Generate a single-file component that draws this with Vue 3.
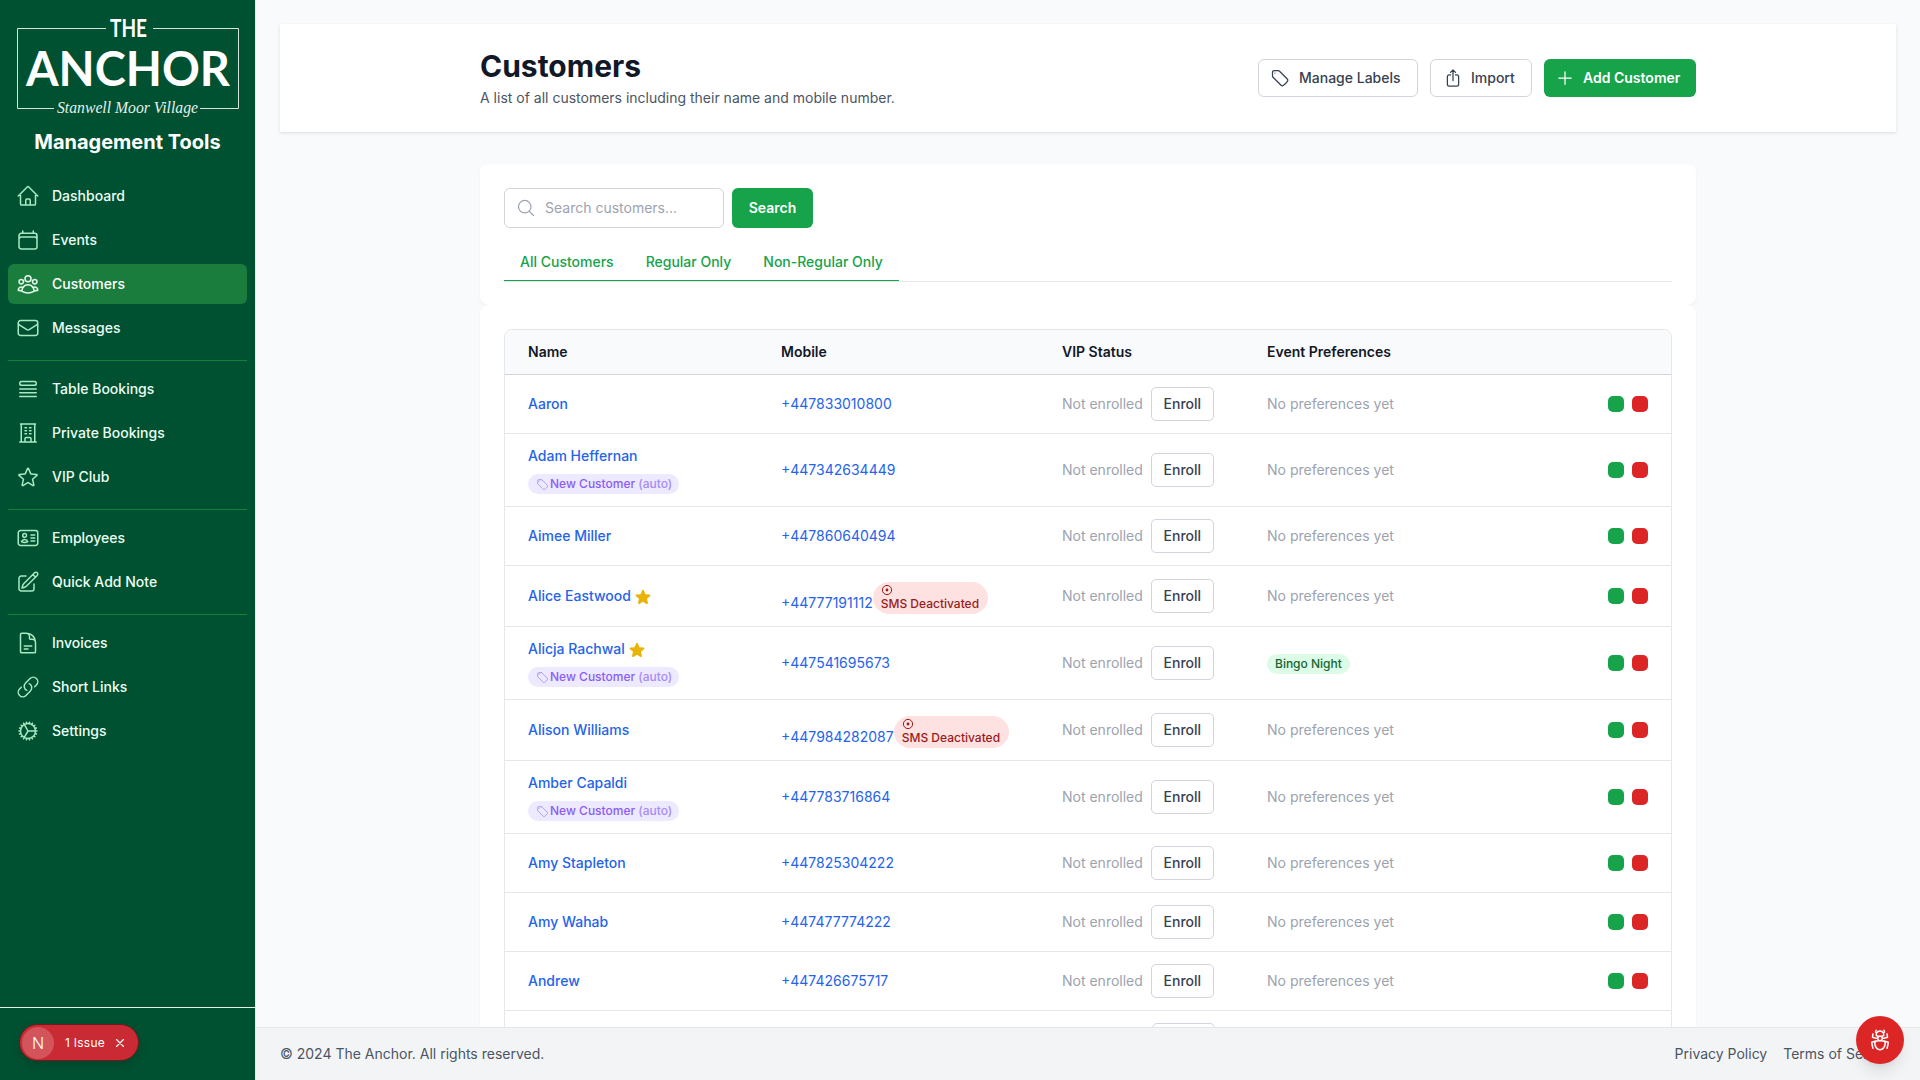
<script setup>
const icons = {
  home: "m2.25 12 8.954-8.955c.44-.439 1.152-.439 1.591 0L21.75 12M4.5 9.75v10.125c0 .621.504 1.125 1.125 1.125H9.75v-4.875c0-.621.504-1.125 1.125-1.125h2.25c.621 0 1.125.504 1.125 1.125V21h4.125c.621 0 1.125-.504 1.125-1.125V9.75M8.25 21h8.25",
  calendar: "M6.75 3v2.25M17.25 3v2.25M3 18.75V7.5a2.25 2.25 0 0 1 2.25-2.25h13.5A2.25 2.25 0 0 1 21 7.5v11.25m-18 0A2.25 2.25 0 0 0 5.25 21h13.5A2.25 2.25 0 0 0 21 18.75m-18 0v-7.5A2.25 2.25 0 0 1 5.25 9h13.5A2.25 2.25 0 0 1 21 11.25v7.5",
  users: "M18 18.72a9.094 9.094 0 0 0 3.741-.479 3 3 0 0 0-4.682-2.72m.94 3.198.001.031c0 .225-.012.447-.037.666A11.944 11.944 0 0 1 12 21c-2.17 0-4.207-.576-5.963-1.584A6.062 6.062 0 0 1 6 18.719m12 0a5.971 5.971 0 0 0-.941-3.197m0 0A5.995 5.995 0 0 0 12 12.75a5.995 5.995 0 0 0-5.058 2.772m0 0a3 3 0 0 0-4.681 2.72 8.986 8.986 0 0 0 3.74.477m.94-3.197a5.971 5.971 0 0 0-.94 3.197M15 6.75a3 3 0 1 1-6 0 3 3 0 0 1 6 0Zm6 3a2.25 2.25 0 1 1-4.5 0 2.25 2.25 0 0 1 4.5 0Zm-13.5 0a2.25 2.25 0 1 1-4.5 0 2.25 2.25 0 0 1 4.5 0Z",
  mail: "M21.75 6.75v10.5a2.25 2.25 0 0 1-2.25 2.25h-15a2.25 2.25 0 0 1-2.25-2.25V6.75m19.5 0A2.25 2.25 0 0 0 19.5 4.5h-15a2.25 2.25 0 0 0-2.25 2.25m19.5 0v.243a2.25 2.25 0 0 1-1.07 1.916l-7.5 4.615a2.25 2.25 0 0 1-2.36 0L3.32 8.91a2.25 2.25 0 0 1-1.07-1.916V6.75",
  queue: "M3.75 12h16.5m-16.5 3.75h16.5m-16.5 3.75h16.5M5.625 4.5h12.75a1.875 1.875 0 0 1 0 3.75H5.625a1.875 1.875 0 0 1 0-3.75Z",
  building: "M3.75 21h16.5M4.5 3h15M5.25 3v18m13.5-18v18M9 6.75h1.5m-1.5 3h1.5m-1.5 3h1.5m3-6H15m-1.5 3H15m-1.5 3H15M9 21v-3.375c0-.621.504-1.125 1.125-1.125h3.75c.621 0 1.125.504 1.125 1.125V21",
  star: "M11.48 3.499a.562.562 0 0 1 1.04 0l2.125 5.111a.563.563 0 0 0 .475.345l5.518.442c.499.04.701.663.321.988l-4.204 3.602a.563.563 0 0 0-.182.557l1.285 5.385a.562.562 0 0 1-.84.61l-4.725-2.885a.562.562 0 0 0-.586 0L6.982 20.54a.562.562 0 0 1-.84-.61l1.285-5.386a.562.562 0 0 0-.182-.557l-4.204-3.602a.562.562 0 0 1 .321-.988l5.518-.442a.563.563 0 0 0 .475-.345L11.48 3.5Z",
  id: "M15 9h3.75M15 12h3.75M15 15h3.75M4.5 19.5h15a2.25 2.25 0 0 0 2.25-2.25V6.75A2.25 2.25 0 0 0 19.5 4.5h-15a2.25 2.25 0 0 0-2.25 2.25v10.5A2.25 2.25 0 0 0 4.5 19.5Zm6-10.125a1.875 1.875 0 1 1-3.75 0 1.875 1.875 0 0 1 3.75 0Zm1.294 6.336a6.721 6.721 0 0 1-3.17.789 6.721 6.721 0 0 1-3.168-.789 3.376 3.376 0 0 1 6.338 0Z",
  pencil: "m16.862 4.487 1.687-1.688a1.875 1.875 0 1 1 2.652 2.652L10.582 16.07a4.5 4.5 0 0 1-1.897 1.13L6 18l.8-2.685a4.5 4.5 0 0 1 1.13-1.897l8.932-8.931Zm0 0L19.5 7.125M18 14v4.75A2.25 2.25 0 0 1 15.75 21H5.25A2.25 2.25 0 0 1 3 18.75V8.25A2.25 2.25 0 0 1 5.25 6H10",
  doc: "M19.5 14.25v-2.625a3.375 3.375 0 0 0-3.375-3.375h-1.5A1.125 1.125 0 0 1 13.5 7.125v-1.5a3.375 3.375 0 0 0-3.375-3.375H8.25m0 12.75h7.5m-7.5 3H12M10.5 2.25H5.625c-.621 0-1.125.504-1.125 1.125v17.25c0 .621.504 1.125 1.125 1.125h12.75c.621 0 1.125-.504 1.125-1.125V11.25a9 9 0 0 0-9-9Z",
  link: "M13.19 8.688a4.5 4.5 0 0 1 1.242 7.244l-4.5 4.5a4.5 4.5 0 0 1-6.364-6.364l1.757-1.757m13.35-.622 1.757-1.757a4.5 4.5 0 0 0-6.364-6.364l-4.5 4.5a4.5 4.5 0 0 0 1.242 7.244",
  cog: "M4.5 12a7.5 7.5 0 0 0 15 0m-15 0a7.5 7.5 0 1 1 15 0m-15 0H3m16.5 0H21m-1.5 0H12m-8.457 3.077 1.41-.513m14.095-5.13 1.41-.513M5.106 17.785l1.15-.964m11.49-9.642 1.149-.964M7.501 19.795l.75-1.3m7.5-12.99.75-1.3m-6.063 16.658.26-1.477m2.605-14.772.26-1.477m0 17.726-.26-1.477M10.698 4.614l-.26-1.477M16.5 19.794l-.75-1.299M7.5 4.205 12 12m6.894 5.785-1.149-.964M6.256 7.178l-1.15-.964m15.352 8.864-1.41-.513M4.954 9.435l-1.41-.514M12.002 12l-3.75 6.495",
  tag: "M9.568 3H5.25A2.25 2.25 0 0 0 3 5.25v4.318c0 .597.237 1.17.659 1.591l9.581 9.581c.699.699 1.78.872 2.607.33a18.095 18.095 0 0 0 5.223-5.223c.542-.827.369-1.908-.33-2.607L11.16 3.66A2.25 2.25 0 0 0 9.568 3ZM6 6h.008v.008H6V6Z",
  upload: "M9 8.25H7.5a2.25 2.25 0 0 0-2.25 2.25v9a2.25 2.25 0 0 0 2.25 2.25h9a2.25 2.25 0 0 0 2.25-2.25v-9a2.25 2.25 0 0 0-2.25-2.25H15m0-3-3-3m0 0-3 3m3-3V15",
  plus: "M12 4.5v15m7.5-7.5h-15",
  search: "m21 21-5.197-5.197m0 0A7.5 7.5 0 1 0 5.196 5.196a7.5 7.5 0 0 0 10.607 10.607Z",
  close: "M6 18 18 6M6 6l12 12",
  bug: "M12 12.75c1.148 0 2.278.08 3.383.237 1.037.146 1.866.966 1.866 2.013 0 3.728-2.35 6.75-5.25 6.75S6.75 18.728 6.75 15c0-1.046.83-1.867 1.866-2.013A24.204 24.204 0 0 1 12 12.75Zm0 0c2.883 0 5.647.508 8.207 1.44a23.91 23.91 0 0 1-1.152 6.06M12 12.75c-2.883 0-5.647.508-8.208 1.44.125 2.104.52 4.136 1.153 6.06M12 12.75a2.25 2.25 0 0 0 2.248-2.354M12 12.75a2.25 2.25 0 0 1-2.248-2.354M12 8.25c.995 0 1.971-.08 2.922-.236.403-.066.74-.358.795-.762a3.778 3.778 0 0 0-.399-2.25M12 8.25c-.995 0-1.97-.08-2.922-.236-.402-.066-.74-.358-.795-.762a3.734 3.734 0 0 1 .4-2.253M12 8.25a2.25 2.25 0 0 0-2.248 2.146M12 8.25a2.25 2.25 0 0 1 2.248 2.146M8.683 5a6.032 6.032 0 0 1-1.155-1.002c.07-.63.27-1.222.574-1.747m.581 2.749A3.75 3.75 0 0 1 15.318 5m0 0c.427-.283.815-.62 1.155-.999a4.471 4.471 0 0 0-.575-1.752M4.921 6a24.048 24.048 0 0 0-.392 3.314c1.668.546 3.416.914 5.223 1.082M19.08 6c.205 1.08.337 2.187.392 3.314a23.882 23.882 0 0 1-5.223 1.082"
}

const starSolid = "M10.788 3.21c.448-1.077 1.976-1.077 2.424 0l2.082 5.006 5.404.434c1.164.093 1.636 1.545.749 2.305l-4.117 3.527 1.257 5.273c.271 1.136-.964 2.033-1.96 1.425L12 18.354 7.373 21.18c-.996.608-2.231-.29-1.96-1.425l1.257-5.273-4.117-3.527c-.887-.76-.415-2.212.749-2.305l5.404-.434 2.082-5.005Z"

const navGroups = [
  [
    { label: "Dashboard", icon: "home" },
    { label: "Events", icon: "calendar" },
    { label: "Customers", icon: "users", active: true },
    { label: "Messages", icon: "mail" }
  ],
  [
    { label: "Table Bookings", icon: "queue" },
    { label: "Private Bookings", icon: "building" },
    { label: "VIP Club", icon: "star" }
  ],
  [
    { label: "Employees", icon: "id" },
    { label: "Quick Add Note", icon: "pencil" }
  ],
  [
    { label: "Invoices", icon: "doc" },
    { label: "Short Links", icon: "link" },
    { label: "Settings", icon: "cog" }
  ]
]

const customers = [
  { name: "Aaron", mobile: "+447833010800" },
  { name: "Adam Heffernan", mobile: "+447342634449", isNew: true },
  { name: "Aimee Miller", mobile: "+447860640494" },
  { name: "Alice Eastwood", mobile: "+44777191112", star: true, sms: true },
  { name: "Alicja Rachwal", mobile: "+447541695673", star: true, isNew: true, pref: "Bingo Night" },
  { name: "Alison Williams", mobile: "+447984282087", sms: true },
  { name: "Amber Capaldi", mobile: "+447783716864", isNew: true },
  { name: "Amy Stapleton", mobile: "+447825304222" },
  { name: "Amy Wahab", mobile: "+447477774222" },
  { name: "Andrew", mobile: "+447426675717" },
  // only the top of this row's button shows above the footer
  { name: "", mobile: "" }
]
</script>

<template>
  <div class="app">
    <!-- SIDEBAR -->
    <aside class="sidebar">
      <svg class="logo" width="255" height="128" viewBox="0 0 255 128">
        <path class="logo-frame" d="M106 28.5H17.5V108.5H54M153 28.5H238.5V108.5H200" />
        <text class="logo-the" x="110" y="37" textLength="37" lengthAdjust="spacingAndGlyphs">THE</text>
        <text class="logo-anchor" x="26" y="86" textLength="204" lengthAdjust="spacingAndGlyphs">ANCHOR</text>
        <text class="logo-script" x="57" y="113" textLength="141" lengthAdjust="spacingAndGlyphs">Stanwell Moor Village</text>
      </svg>
      <div class="brand">Management Tools</div>

      <nav class="nav">
        <div v-for="(group, i) in navGroups" :key="i" class="nav-group">
          <a v-for="item in group" :key="item.label" class="nav-item" :class="{ active: item.active }">
            <svg class="nav-icon" viewBox="0 0 24 24" fill="none" stroke="currentColor" stroke-width="1.5" stroke-linecap="round" stroke-linejoin="round">
              <path :d="icons[item.icon]" />
            </svg>
            {{ item.label }}
          </a>
        </div>
      </nav>

      <div class="sidebar-bottom">
        <div class="issue-pill">
          <span class="issue-n">N</span>
          <span class="issue-text">1 Issue</span>
          <svg class="issue-x" viewBox="0 0 24 24" fill="none" stroke="currentColor" stroke-width="2" stroke-linecap="round">
            <path :d="icons.close" />
          </svg>
        </div>
      </div>
    </aside>

    <div class="main">
      <div class="scroll">
        <!-- HEADER -->
        <header class="page-header">
          <div class="container header-row">
            <div>
              <h1 class="title">Customers</h1>
              <p class="subtitle">A list of all customers including their name and mobile number.</p>
            </div>
            <div class="header-actions">
              <button class="btn btn-labels">
                <svg class="btn-icon" viewBox="0 0 24 24" fill="none" stroke="currentColor" stroke-width="1.5" stroke-linecap="round" stroke-linejoin="round"><path :d="icons.tag" /></svg>
                Manage Labels
              </button>
              <button class="btn btn-import">
                <svg class="btn-icon" viewBox="0 0 24 24" fill="none" stroke="currentColor" stroke-width="1.5" stroke-linecap="round" stroke-linejoin="round"><path :d="icons.upload" /></svg>
                Import
              </button>
              <button class="btn btn-primary btn-add">
                <svg class="btn-icon" viewBox="0 0 24 24" fill="none" stroke="currentColor" stroke-width="1.5" stroke-linecap="round" stroke-linejoin="round"><path :d="icons.plus" /></svg>
                Add Customer
              </button>
            </div>
          </div>
        </header>

        <div class="container content">
          <!-- SEARCH + TABS -->
          <section class="card search-card">
            <div class="search-row">
              <div class="search-box">
                <svg class="search-icon" viewBox="0 0 24 24" fill="none" stroke="currentColor" stroke-width="1.5" stroke-linecap="round" stroke-linejoin="round"><path :d="icons.search" /></svg>
                <input class="search-input" placeholder="Search customers..." />
              </div>
              <button class="btn btn-primary btn-search">Search</button>
            </div>
            <div class="tabs">
              <div class="tab-list">
                <a class="tab">All Customers</a>
                <a class="tab">Regular Only</a>
                <a class="tab">Non-Regular Only</a>
              </div>
            </div>
          </section>

          <!-- TABLE -->
          <section class="card table-card">
            <div class="table-wrap">
              <table class="table">
                <colgroup>
                  <col style="width: 253px" />
                  <col style="width: 281px" />
                  <col style="width: 205px" />
                  <col />
                  <col style="width: 120px" />
                </colgroup>
                <thead>
                  <tr>
                    <th>Name</th>
                    <th>Mobile</th>
                    <th>VIP Status</th>
                    <th>Event Preferences</th>
                    <th></th>
                  </tr>
                </thead>
                <tbody>
                  <tr v-for="(c, i) in customers" :key="i">
                    <td>
                      <div class="name-line">
                        <a class="link">{{ c.name }}</a>
                        <svg v-if="c.star" class="star" viewBox="0 0 24 24" fill="#eab308"><path :d="starSolid" /></svg>
                      </div>
                      <div v-if="c.isNew" class="label-pill">
                        <svg class="label-icon" viewBox="0 0 24 24" fill="none" stroke="currentColor" stroke-width="1.5" stroke-linecap="round" stroke-linejoin="round"><path :d="icons.tag" /></svg>
                        <span>New Customer <span class="auto">(auto)</span></span>
                      </div>
                    </td>
                    <td>
                      <a class="link phone">{{ c.mobile }}</a><span v-if="c.sms" class="sms-badge">
                        <svg class="sms-icon" viewBox="0 0 12 12" fill="none" stroke="currentColor"><circle cx="6" cy="6" r="4.6" /><circle cx="6" cy="6" r="1.4" fill="currentColor" stroke="none" /></svg>
                        SMS Deactivated
                      </span>
                    </td>
                    <td>
                      <div class="vip">
                        <span v-if="c.name" class="muted">Not enrolled</span>
                        <span v-else class="blank-status"></span>
                        <button class="enroll">{{ c.name ? "Enroll" : "" }}</button>
                      </div>
                    </td>
                    <td>
                      <span v-if="c.pref" class="pref">{{ c.pref }}</span>
                      <span v-else-if="c.name" class="muted">No preferences yet</span>
                    </td>
                    <td>
                      <div class="row-actions">
                        <span class="dot green"></span>
                        <span class="dot red"></span>
                      </div>
                    </td>
                  </tr>
                </tbody>
              </table>
            </div>
          </section>
        </div>
      </div>

      <!-- FOOTER -->
      <footer class="footer">
        <span>© 2024 The Anchor. All rights reserved.</span>
        <div class="footer-links">
          <a>Privacy Policy</a>
          <a>Terms of Service</a>
        </div>
      </footer>
    </div>

    <button class="bug-btn">
      <svg viewBox="0 0 24 24" fill="none" stroke="currentColor" stroke-width="1.5" stroke-linecap="round" stroke-linejoin="round"><path :d="icons.bug" /></svg>
    </button>
  </div>
</template>

<style>
html, body {
  margin: 0;
  height: 100%;
  overflow: hidden;
}
</style>

<style scoped>
.app {
  display: flex;
  height: 100vh;
  overflow: hidden;
  background: #f9fafb;
  font-family: Inter, "Liberation Sans", sans-serif;
  font-size: 14px;
  line-height: 20px;
  color: #111827;
}

/* sidebar */
.sidebar {
  width: 255px;
  flex-shrink: 0;
  display: flex;
  flex-direction: column;
  background: #005131;
  color: #f0fdf4;
  border-right: 1px solid #e5e7eb;
}

.logo {
  display: block;
  flex-shrink: 0;
}

.logo-frame {
  fill: none;
  stroke: #d5e5dc;
  stroke-width: 1;
}

.logo-the {
  font-family: Lato, sans-serif;
  font-size: 24px;
  font-weight: 700;
  fill: #fff;
}

.logo-anchor {
  font-family: Lato, sans-serif;
  font-size: 47px;
  font-weight: 700;
  fill: #fff;
}

.logo-script {
  font-family: "Liberation Serif", serif;
  font-style: italic;
  font-size: 17px;
  fill: #e6f0ea;
}

.brand {
  height: 28px;
  line-height: 28px;
  text-align: center;
  font-size: 20px;
  font-weight: 700;
  color: #fff;
}

.nav {
  margin-top: 20px;
  display: flex;
  flex-direction: column;
  padding: 0 8px;
}

.nav-group {
  display: flex;
  flex-direction: column;
  gap: 4px;
  padding: 8px 0 12px;
  border-bottom: 1px solid #15803d;
}

.nav-group:first-child {
  padding-top: 0;
}

.nav-group:last-child {
  border-bottom: none;
}

.nav-item {
  height: 40px;
  display: flex;
  align-items: center;
  gap: 12px;
  padding: 0 8px;
  border-radius: 6px;
  font-weight: 500;
  color: #ecfdf3;
}

.nav-item.active {
  background: #1a7d3e;
  color: #fff;
}

.nav-icon {
  width: 24px;
  height: 24px;
  flex-shrink: 0;
  color: #a7e9c1;
}

.nav-item.active .nav-icon {
  color: #e6f9ec;
}

.sidebar-bottom {
  margin-top: auto;
  height: 73px;
  box-sizing: border-box;
  padding: 16px 19px;
  border-top: 1px solid #e5efe9;
}

.issue-pill {
  width: 120px;
  height: 37px;
  box-sizing: border-box;
  display: flex;
  align-items: center;
  border-radius: 19px;
  background: #ca2a33;
  border: 1px solid #6d1b1f;
  box-shadow: 0 4px 10px rgba(0, 0, 0, .15);
  color: #fff;
  padding-left: 2px;
}

.issue-n {
  width: 32px;
  height: 32px;
  flex-shrink: 0;
  display: flex;
  align-items: center;
  justify-content: center;
  border-radius: 50%;
  background: rgba(255, 255, 255, .2);
  font-size: 16px;
  font-weight: 300;
}

.issue-text {
  margin-left: 11px;
  font-size: 12px;
  font-weight: 400;
  letter-spacing: .25px;
}

.issue-x {
  width: 14px;
  height: 14px;
  margin-left: 8px;
}

/* main */
.main {
  flex: 1;
  min-width: 0;
  display: flex;
  flex-direction: column;
}

.scroll {
  flex: 1;
  min-height: 0;
  overflow: hidden;
  padding: 24px 24px 0;
}

.container {
  width: 1216px;
  margin: 0 auto;
}

.page-header {
  background: #fff;
  box-shadow: 0 1px 3px rgba(0, 0, 0, .12);
  padding: 24px 0;
}

.header-row {
  display: flex;
  align-items: center;
  justify-content: space-between;
}

.title {
  margin: 0;
  font-size: 30px;
  line-height: 36px;
  font-weight: 700;
  color: #111827;
}

.subtitle {
  margin: 4px 0 0;
  color: #4b5563;
}

.header-actions {
  display: flex;
  gap: 12px;
}

.btn {
  height: 38px;
  box-sizing: border-box;
  display: inline-flex;
  align-items: center;
  border: 1px solid #d1d5db;
  border-radius: 6px;
  background: #fff;
  color: #374151;
  font-family: inherit;
  font-size: 14px;
  font-weight: 500;
  padding: 0 16px 1px 12px;
  white-space: nowrap;
  cursor: pointer;
}

.btn-icon {
  width: 20px;
  height: 20px;
  margin-right: 8px;
  flex-shrink: 0;
}

.btn-primary {
  background: #16a34a;
  border-color: transparent;
  color: #fff;
  font-weight: 600;
}

.btn-labels { width: 160px; padding-left: 11px; }
.btn-labels .btn-icon { margin-right: 9px; }
.btn-import { width: 102px; }
.btn-add { width: 152px; padding-left: 10px; }

.content {
  padding-top: 32px;
}

.card {
  background: #fff;
  border-radius: 8px;
  box-shadow: 0 1px 2px rgba(0, 0, 0, .06);
}

.search-card {
  padding: 24px 24px 24px;
  height: 141px;
  box-sizing: border-box;
}

.search-row {
  display: flex;
  gap: 8px;
}

.search-box {
  width: 220px;
  height: 40px;
  box-sizing: border-box;
  display: flex;
  align-items: center;
  gap: 8px;
  padding: 0 12px 0 11px;
  border: 1px solid #d1d5db;
  border-radius: 6px;
  background: #fff;
}

.search-icon {
  width: 20px;
  height: 20px;
  flex-shrink: 0;
  color: #9ca3af;
}

.search-input {
  flex: 1;
  min-width: 0;
  border: none;
  outline: none;
  padding: 0 0 1px 1px;
  font-family: inherit;
  font-size: 14px;
  color: #111827;
}

.search-input::placeholder {
  color: #9ca3af;
}

.btn-search {
  width: 81px;
  height: 40px;
  padding: 0 0 1px;
  justify-content: center;
}

.tabs {
  margin-top: 16px;
  height: 38px;
  box-sizing: border-box;
  border-bottom: 1px solid #e5e7eb;
}

.tab-list {
  display: inline-flex;
  border-bottom: 1px solid #16a34a;
  height: 37px;
  box-sizing: border-box;
}

.tab {
  padding: 8px 16px;
  color: #16a34a;
  font-weight: 500;
}

.table-card {
  padding: 24px;
}

.table-wrap {
  border: 1px solid #e5e7eb;
  border-radius: 8px;
  overflow: hidden;
}

.table {
  width: 100%;
  table-layout: fixed;
  border-collapse: collapse;
}

.table th {
  height: 44px;
  padding: 0 23px;
  text-align: left;
  font-weight: 600;
  color: #111827;
  background: #f9fafb;
  border-bottom: 1px solid #d1d5db;
}

.table td {
  padding: 12px 23px;
  vertical-align: middle;
  border-bottom: 1px solid #e5e7eb;
}

.name-line {
  display: flex;
  align-items: center;
  gap: 3px;
  height: 20px;
}

.link {
  color: #2563eb;
  font-weight: 500;
}

.phone {
  font-weight: 400;
}

.star {
  width: 18px;
  height: 18px;
  margin-top: 1px;
}

.label-pill {
  display: flex;
  align-items: center;
  width: fit-content;
  height: 20px;
  margin-top: 8px;
  padding: 0 7px 0 8px;
  border-radius: 10px;
  background: #ede9fe;
  color: #8b5cf6;
  font-size: 12px;
  font-weight: 500;
  white-space: nowrap;
}

.auto {
  color: #a78bfa;
}

.label-icon {
  width: 13px;
  height: 13px;
  margin-right: 1px;
  color: #a78bfa;
}

.sms-badge {
  display: inline-block;
  margin-top: 4px;
  padding: 2px 9px 2px 8px;
  line-height: 16px;
  border-radius: 16px;
  background: #fee2e2;
  color: #991b1b;
  font-size: 12px;
  font-weight: 500;
  white-space: nowrap;
}

.sms-icon {
  display: block;
  width: 12px;
  height: 12px;
}

.vip {
  display: flex;
  align-items: center;
  gap: 8px;
}

.blank-status {
  width: 82px;
}

.muted {
  color: #9ca3af;
}

.enroll {
  width: 63px;
  height: 34px;
  box-sizing: border-box;
  border: 1px solid #d1d5db;
  border-radius: 5px;
  background: #fff;
  color: #374151;
  font-family: inherit;
  font-size: 14px;
  font-weight: 500;
  padding: 0 0 1px;
}

.pref {
  display: inline-block;
  height: 20px;
  padding: 0 8px;
  border-radius: 10px;
  background: #dcfce7;
  color: #166534;
  font-size: 12px;
  font-weight: 500;
}

.row-actions {
  display: flex;
  justify-content: flex-end;
  gap: 8px;
}

.dot {
  width: 16px;
  height: 16px;
  border-radius: 5px;
}

.dot.green { background: #16a34a; }
.dot.red { background: #dc2626; }

/* footer */
.footer {
  height: 53px;
  flex-shrink: 0;
  box-sizing: border-box;
  display: flex;
  align-items: center;
  justify-content: space-between;
  padding: 0 24px;
  background: #f3f4f6;
  border-top: 1px solid #e5e7eb;
  color: #4b5563;
}

.footer-links {
  display: flex;
  gap: 16px;
}

.bug-btn {
  position: fixed;
  right: 16px;
  bottom: 16px;
  width: 48px;
  height: 48px;
  display: flex;
  align-items: center;
  justify-content: center;
  border: none;
  border-radius: 50%;
  background: #dc2626;
  color: #fff;
  padding: 0;
  box-shadow: 0 10px 15px -3px rgba(0, 0, 0, .1), 0 4px 6px -4px rgba(0, 0, 0, .1);
}

.bug-btn svg {
  width: 24px;
  height: 24px;
}
</style>
